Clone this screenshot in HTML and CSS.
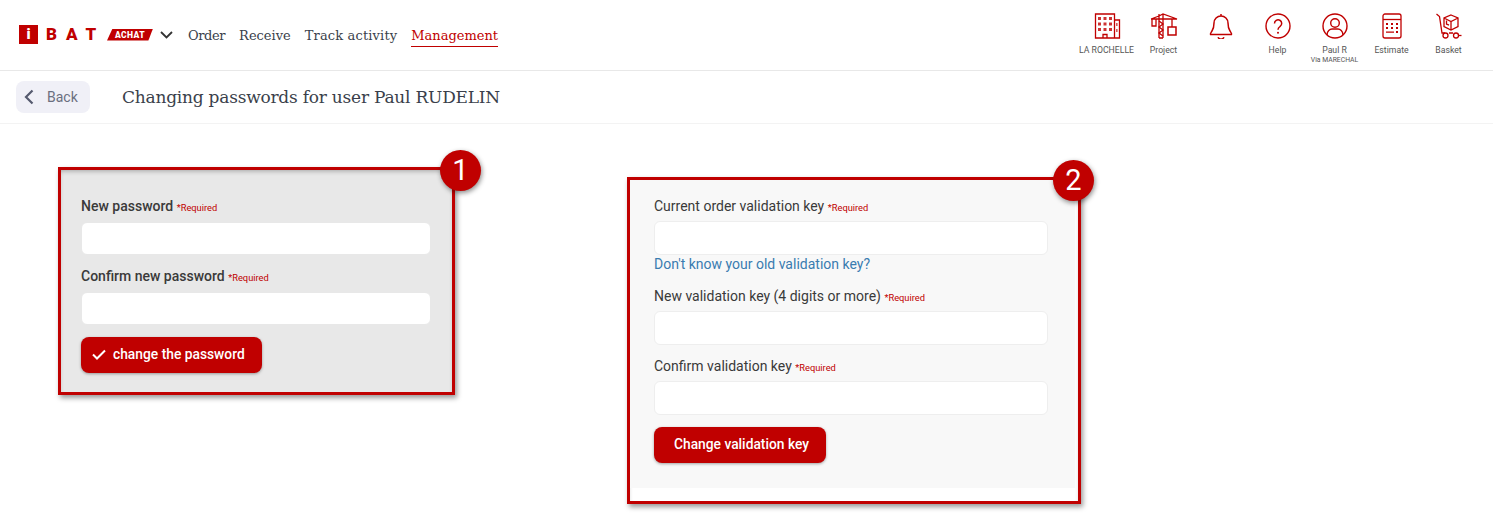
FILE: index.html
```html
<!DOCTYPE html>
<html lang="en">
<head>
<meta charset="utf-8">
<title>Changing passwords</title>
<link rel="stylesheet" href="styles.css">
</head>
<body>
<header class="topbar">
  <a class="logo" href="#"><span class="logo-i">i</span><span class="logo-bat">BAT</span><span class="logo-achat">ACHAT</span></a>
  <svg class="logo-chevron" width="13" height="8" viewBox="0 0 13 8"><path d="M1 1l5.500 5.500L12 1" fill="none" stroke="#333" stroke-width="1.800"/></svg>
  <nav class="nav">
    <a href="#">Order</a>
    <a href="#">Receive</a>
    <a href="#" class="nav-track">Track activity</a>
    <a href="#" class="active">Management</a>
  </nav>
  <div class="tools">
    <div class="tool">
      <svg class="ico" viewBox="0 0 28 26"><g fill="none" stroke="#c00000" stroke-width="1.300"><path d="M2.500 1h19v24h-19zM21.500 7h5v18h-5z"/><path d="M10 25v-3.500h4V25"/></g><g fill="#c00000" opacity=".8"><path d="M5 4h3v3H5zM10.500 4h3v3h-3zM16 4h3v3h-3zM5 9.500h3v3H5zM10.500 9.500h3v3h-3zM16 9.500h3v3h-3zM5 15h3v3H5zM10.500 15h3v3h-3zM16 15h3v3h-3zM23.200 10h1.300v3h-1.300zM23.200 16h1.300v3h-1.300z"/></g></svg>
      <span class="tool-label">LA ROCHELLE</span>
    </div>
    <div class="tool">
      <svg class="ico" viewBox="0 0 28 26"><g fill="none" stroke="#c00000" stroke-width="1.300"><path d="M9 25V1M13 25V1M1 6l8-3 4-2 14 5H1M9 25h4"/><path d="M9 8l4 3-4 3 4 3-4 3 4 3"/><path d="M2 6v7h4V6M22 6v8"/><path d="M18 14h8v8h-8z" stroke-width="1.500"/></g></svg>
      <span class="tool-label">Project</span>
    </div>
    <div class="tool">
      <svg class="ico" viewBox="0 0 28 26"><g fill="none" stroke="#c00000" stroke-width="1.500"><path d="M14 1v2.500M5 18c2-3 2-5 2-8a7 7 0 0 1 14 0c0 3 0 5 2 8 1 1.500 2 2.500 1.500 3.500h-21C3 20.500 4 19.500 5 18z"/><path d="M11 24.200a3.300 3.300 0 0 0 6 0"/></g></svg>
      <span class="tool-label tool-empty">&nbsp;</span>
    </div>
    <div class="tool">
      <svg class="ico" viewBox="0 0 28 26"><circle cx="14" cy="13" r="12" fill="none" stroke="#c00000" stroke-width="1.400"/><path d="M10.500 10.500a3.600 3.600 0 1 1 5.500 3c-1.500 1-2 1.700-2 3.200" fill="none" stroke="#c00000" stroke-width="1.500"/><circle cx="14" cy="19.800" r="1" fill="#c00000"/></svg>
      <span class="tool-label">Help</span>
    </div>
    <div class="tool tool-user">
      <svg class="ico" viewBox="0 0 28 26"><g fill="none" stroke="#c00000" stroke-width="1.400"><circle cx="14" cy="13" r="12"/><circle cx="14" cy="10" r="4.300"/><path d="M6 22c0-4 3-6 5-6h6c2 0 5 2 5 6"/></g></svg>
      <span class="tool-label">Paul R</span>
      <span class="tool-sub">Via MARECHAL</span>
    </div>
    <div class="tool">
      <svg class="ico" viewBox="0 0 28 26"><g fill="none" stroke="#c00000" stroke-width="1.300"><rect x="5" y="1" width="18" height="24" rx="2"/><path d="M5 6.500h18"/></g><path fill="#c00000" d="M8 10h2v2H8zM13 10h2v2h-2zM18 10h2v2h-2zM8 14h2v2H8zM13 14h2v2h-2zM18 14h2v2h-2zM8 18.500h8v1.300H8zM18 18h2v2h-2z"/></svg>
      <span class="tool-label">Estimate</span>
    </div>
    <div class="tool">
      <svg class="ico" viewBox="0 0 28 26"><g fill="none" stroke="#c00000" stroke-width="1.300"><path d="M1.500 1l3 2.500 2.500 16.500h3M14 20h4"/><path d="M16 2l7 3v8.500L16 17l-7-3.500V5zM9 5l7 3.500L23 5M16 8.500V17"/><path d="M11.500 7.500v3.500l2.500 1.200"/><circle cx="10.500" cy="22.500" r="2.500"/><circle cx="21" cy="22.500" r="2.500"/><path d="M23.500 22.500h3"/></g></svg>
      <span class="tool-label">Basket</span>
    </div>
  </div>
</header>

<div class="subbar">
  <a class="back" href="#">
    <svg width="10" height="16" viewBox="0 0 10 16"><path d="M8.500 1.500L2 8l6.500 6.500" fill="none" stroke="#555a6e" stroke-width="2.200"/></svg>
    <span>Back</span>
  </a>
  <h1 class="title">Changing passwords for user Paul RUDELIN</h1>
</div>

<main class="panels">
  <section class="callout callout-one">
    <span class="badge">1</span>
    <form class="form-one">
      <label class="lbl lbl-strong">New password <small>*Required</small></label>
      <input class="inp inp-one" type="password">
      <label class="lbl lbl-strong">Confirm new password <small>*Required</small></label>
      <input class="inp inp-one" type="password">
      <button class="btn btn-check" type="button">
        <svg width="14" height="11" viewBox="0 0 14 11"><path d="M1 5.500l4 4L13 1.500" fill="none" stroke="#fff" stroke-width="2"/></svg>
        change the password
      </button>
    </form>
  </section>

  <section class="callout callout-two">
    <span class="badge">2</span>
    <form class="form-two">
      <label class="lbl">Current order validation key <small>*Required</small></label>
      <input class="inp" type="password">
      <a class="forgot" href="#">Don't know your old validation key?</a>
      <label class="lbl">New validation key (4 digits or more) <small>*Required</small></label>
      <input class="inp inp-gap" type="password">
      <label class="lbl">Confirm validation key <small>*Required</small></label>
      <input class="inp inp-gap" type="password">
      <button class="btn btn-plain" type="button">Change validation key</button>
    </form>
  </section>
</main>
</body>
</html>
```
FILE: styles.css
```css
* { box-sizing: border-box; }
html, body { margin: 0; padding: 0; }
body { background: #fff; font-family: Roboto, "Liberation Sans", sans-serif; color: #333; height: 516px; overflow: hidden; }
a { text-decoration: none; }

.topbar { height: 71px; display: flex; align-items: center; padding-left: 19px; border-bottom: 1px solid #e8e8e8; }
.logo { display: flex; align-items: center; color: #c00000; width: 134px; flex: none; margin-top: -1px; }
.logo-i { width: 19px; height: 19px; background: #c00000; color: #fff; font-weight: 900; font-size: 15px; line-height: 19px; text-align: center; }
.logo-bat { margin-left: 8px; width: 54px; font-weight: 900; font-size: 17px; letter-spacing: 9px; line-height: 19px; white-space: nowrap; }
.logo-achat { width: 46px; height: 12px; background: #c00000; color: #fff; font-size: 8.500px; font-weight: 900; line-height: 12px; letter-spacing: .4px; text-align: center; clip-path: polygon(12% 0, 100% 0, 90% 100%, 0 100%); margin-left: 7px; flex: none; }
.logo-chevron { flex: none; margin-left: 7px; }
.nav { display: flex; gap: 14px; margin-left: 15px; margin-top: 2px; font-family: "DejaVu Serif", serif; font-size: 13px; }
.nav a { color: #3a3f4b; line-height: 19px; padding-bottom: 1px; }
.nav a:first-child { letter-spacing: -.4px; }
.nav a.nav-track { letter-spacing: .15px; }
.nav a.active { color: #c00000; border-bottom: 1px solid #c00000; }
.tools { margin-left: auto; display: flex; padding-right: 16px; }
.tool { width: 57px; height: 62px; padding-top: 9px; display: flex; flex-direction: column; align-items: center; }
.ico { width: 28px; height: 26px; flex: none; }
.tool-label { font-size: 8.700px; color: #555; line-height: 11px; margin-top: 6px; white-space: nowrap; }
.tool-sub { font-size: 6.800px; color: #555; line-height: 8px; margin-top: 0; white-space: nowrap; }

.subbar { height: 53px; display: flex; align-items: center; padding-left: 16px; border-bottom: 1px solid #f3f3f3; }
.back { width: 74px; height: 32px; background: #f0f0f7; border-radius: 8px; display: flex; align-items: center; padding-left: 8px; gap: 13px; color: #6b6f80; font-size: 14px; margin-top: -1px; }
.title { margin: 0 0 0 32px; font-family: "DejaVu Serif", serif; font-weight: 400; font-size: 17px; color: #3a3f4b; letter-spacing: -.225px; }

.panels { display: flex; align-items: flex-start; padding-left: 58px; }
.callout { position: relative; border: 3px solid #c00000; box-shadow: 2px 3px 5px rgba(0,0,0,.4), inset 0 3px 5px -2px rgba(0,0,0,.3); flex: none; }
.callout-one { width: 397px; height: 228px; margin-top: 43px; background: #e8e8e8; }
.callout-two { width: 454px; height: 327px; margin-top: 53px; margin-left: 172px; background: #fff; }
.badge { position: absolute; width: 41px; height: 41px; border-radius: 50%; background: #c00000; color: #fff; font-size: 29px; line-height: 41px; text-align: center; box-shadow: 1px 2px 5px rgba(0,0,0,.45); }
.callout-one .badge { left: 379px; top: -20px; }
.callout-two .badge { left: 423px; top: -20px; }

.form-one { padding: 26px 21px 0 20px; display: flex; flex-direction: column; align-items: flex-start; }
.form-two { height: 308px; width: 445px; background: #f8f8f8; padding: 16px 27px 0 24px; display: flex; flex-direction: column; align-items: flex-start; }
.lbl { font-size: 14px; line-height: 20px; height: 20px; color: #3a3a3a; white-space: nowrap; }
.lbl-strong { font-weight: 500; }
.lbl small { font-size: 9.300px; line-height: 0; color: #c00000; font-weight: 400; }
.inp { display: block; width: 100%; height: 34px; background: #fff; border: 1px solid #eee; border-radius: 6px; margin-top: 5px; padding: 0; }
.inp-one { height: 33px; margin-top: 6px; margin-bottom: 11px; border-color: #e8e8e8; }
.inp-gap { margin-bottom: 11px; }
.forgot { font-size: 14px; line-height: 19px; color: #3a7cb0; margin-bottom: 12px; }
.btn { border: 0; height: 36px; border-radius: 8px; background: #c00000; color: #fff; font-family: inherit; font-size: 13.800px; font-weight: 500; box-shadow: 0 1px 3px rgba(0,0,0,.35); padding: 0 0 2px; display: flex; align-items: center; }
.btn-check { width: 181px; gap: 7px; padding-left: 11px; margin-top: 1px; }
.btn-plain { width: 172px; justify-content: center; margin-top: 1px; padding-left: 3px; }
```
